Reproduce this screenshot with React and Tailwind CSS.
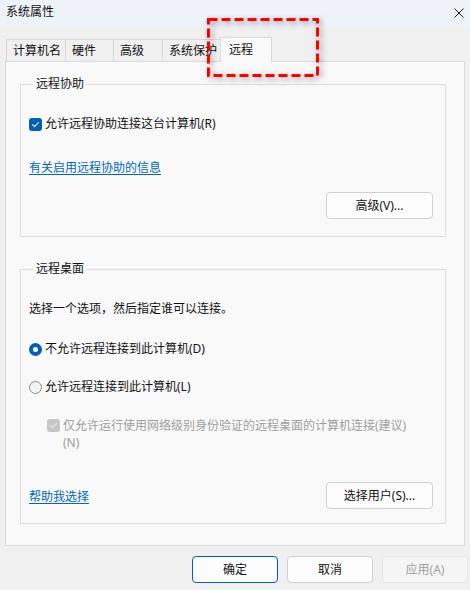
import React from 'react';

const tabs = [
  { label: '计算机名', w: 'w-[60px]' },
  { label: '硬件', w: 'w-[49px]' },
  { label: '高级', w: 'w-[50px]' },
  { label: '系统保护', w: 'w-[59px]' },
];

function Check({ disabled }) {
  return (
    <span className={`flex h-[13px] w-[13px] shrink-0 items-center justify-center rounded-[3px] ${disabled ? 'bg-[#c6c6c6]' : 'bg-[#005fb8]'}`}>
      <svg width="9" height="9" viewBox="0 0 9 9" fill="none">
        <path d="M1.6 4.7 L3.6 6.7 L7.5 2.5" stroke={disabled ? '#ececec' : '#ffffff'} strokeWidth="1.1" strokeLinecap="round" strokeLinejoin="round" />
      </svg>
    </span>
  );
}

function Radio({ on }) {
  if (on) {
    return (
      <span className="flex h-[13px] w-[13px] shrink-0 items-center justify-center rounded-full bg-[#005fb8]">
        <span className="h-[5px] w-[5px] rounded-full bg-white" />
      </span>
    );
  }
  return <span className="h-[13px] w-[13px] shrink-0 rounded-full border border-[#8a8a8a] bg-[#f4f4f4]" />;
}

function Btn({ children, className = '' }) {
  return (
    <button className={`flex h-[27px] items-center justify-center rounded-[4px] border leading-[16px] ${className}`}>
      {children}
    </button>
  );
}

export default function App() {
  return (
    <div className="relative h-[590px] w-[470px] overflow-hidden bg-[#f0f0f0] font-['Noto_Sans','Noto_Sans_CJK_SC',sans-serif] text-[12px] text-[#111111]">
      {/* title bar */}
      <div className="flex h-[28px] items-start justify-between bg-[#eef2f9] pl-[6px] pr-[6px]">
        <span className="pt-[4px] leading-[16px]">系统属性</span>
        <svg className="mt-[8px]" width="10" height="10" viewBox="0 0 10 10">
          <path d="M0.5 0.5 L9.5 9.5 M9.5 0.5 L0.5 9.5" stroke="#1a1a1a" strokeWidth="1" />
        </svg>
      </div>

      {/* tabs */}
      <div className="ml-[6px] mt-[9px] flex h-[24px] items-end">
        {tabs.map((t, i) => (
          <div
            key={t.label}
            className={`flex h-[22px] items-center border border-b-0 border-[#d9d9d9] bg-[#f0f0f0] pl-[6px] leading-[16px] ${t.w} ${i > 0 ? '-ml-px' : ''}`}
          >
            {t.label}
          </div>
        ))}
        <div className="relative z-10 -mb-px -ml-px flex h-[25px] w-[52px] items-center border border-b-0 border-[#d9d9d9] bg-[#f9f9f9] pl-[8px] pb-[1px] leading-[16px]">
          远程
        </div>
      </div>

      {/* panel */}
      <div className="mx-[5px] h-[485px] w-[460px] border border-[#dadada] bg-[#f9f9f9] pl-[14px] pt-[14px]">
        <fieldset className="flex h-[161px] w-[426px] flex-col border border-[#dcdcdc] pl-[8px] pr-[12px]">
          <legend className="ml-[4px] pl-[3px] pr-[2px] leading-[16px]">远程协助</legend>
          <div className="mt-[24px] flex h-[16px] items-center gap-[3px] leading-[16px]">
            <Check />
            <span>允许远程协助连接这台计算机(R)</span>
          </div>
          <a className="mt-[28px] w-fit leading-[16px] text-[#0067c0] underline underline-offset-2">有关启用远程协助的信息</a>
          <Btn className="mt-[16px] w-[107px] self-end border-[#d0d0d0] bg-[#fdfdfd]">高级(V)...</Btn>
        </fieldset>

        <fieldset className="mt-[24px] flex h-[263px] w-[426px] flex-col border border-[#dcdcdc] pl-[8px] pr-[12px]">
          <legend className="ml-[4px] pl-[3px] pr-[2px] leading-[16px]">远程桌面</legend>
          <p className="mt-[24px] leading-[16px]">选择一个选项，然后指定谁可以连接。</p>
          <div className="mt-[24px] flex h-[16px] items-center gap-[3px] leading-[16px]">
            <Radio on />
            <span>不允许远程连接到此计算机(D)</span>
          </div>
          <div className="mt-[22px] flex h-[16px] items-center gap-[3px] leading-[16px]">
            <Radio />
            <span>允许远程连接到此计算机(L)</span>
          </div>
          <div className="mt-[22px] flex items-start gap-[3px] pl-[18px] leading-[17px] text-[#9e9e9e]">
            <span className="mt-[2px]"><Check disabled /></span>
            <span>
              仅允许运行使用网络级别身份验证的远程桌面的计算机连接(建议)
              <br />
              (N)
            </span>
          </div>
          <div className="mt-[31px] flex items-center justify-between">
            <a className="mt-[3px] leading-[16px] text-[#0067c0] underline underline-offset-2">帮助我选择</a>
            <Btn className="w-[107px] border-[#d0d0d0] bg-[#fdfdfd]">选择用户(S)...</Btn>
          </div>
        </fieldset>
      </div>

      {/* bottom buttons */}
      <div className="mt-[10px] flex justify-end gap-[9px] pr-[2px]">
        <Btn className="w-[86px] border-[#005fb8] bg-[#fdfdfd]">确定</Btn>
        <Btn className="w-[86px] border-[#d0d0d0] bg-[#fdfdfd]">取消</Btn>
        <Btn className="w-[86px] border-[#e6e6e6] bg-[#f5f5f5] text-[#a0a0a0]">应用(A)</Btn>
      </div>

      {/* annotation */}
      <svg
        className="absolute left-[207px] top-[18px] drop-shadow-[2px_2px_3px_rgba(0,0,0,0.45)]"
        width="112"
        height="59"
        viewBox="0 0 112 59"
        fill="none"
      >
        <rect x="1.5" y="1.5" width="109" height="56" stroke="#ff0000" strokeWidth="3" strokeDasharray="9 4" />
      </svg>
    </div>
  );
}
